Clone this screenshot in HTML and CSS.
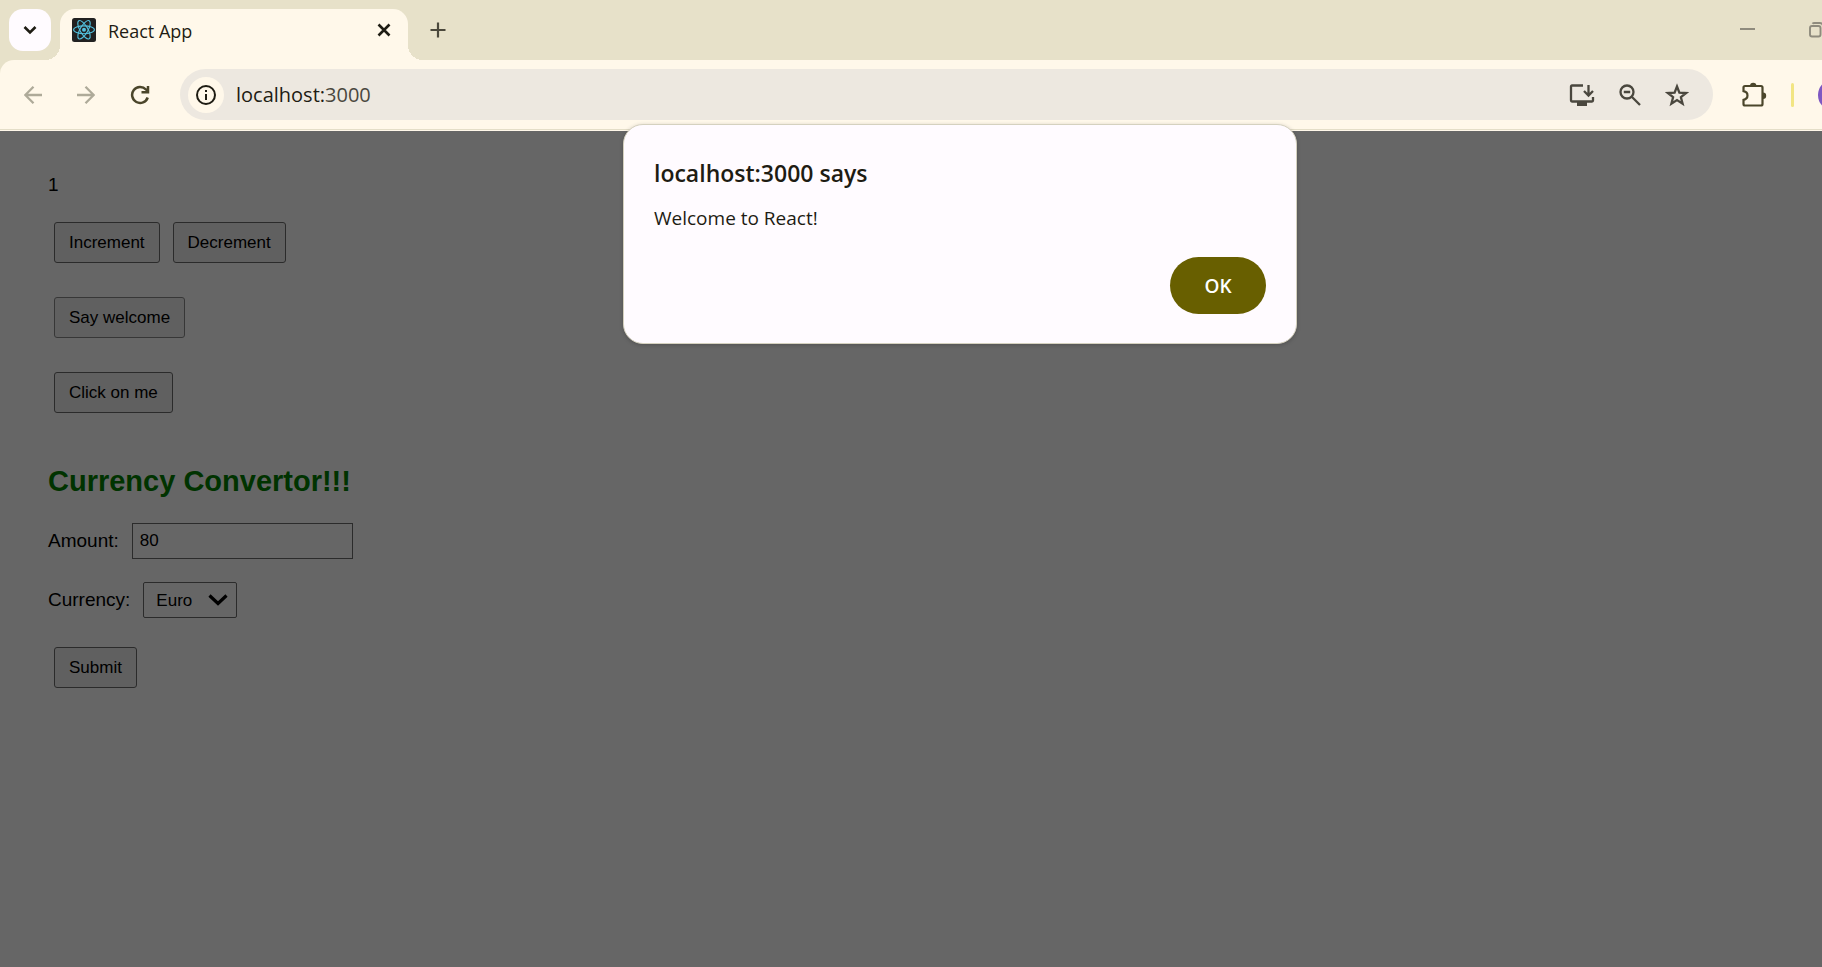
FILE: index.html
```html
<!DOCTYPE html>
<html lang="en">
<head>
<meta charset="utf-8">
<title>React App</title>
<link rel="stylesheet" href="styles.css">
</head>
<body>
<header class="browser">
  <div class="tab-strip">
    <button class="tab-search" aria-label="Search tabs"><svg width="14" height="14" viewBox="0 0 14 14"><path d="M1.500 4 7 9.500 12.500 4" class="stroke thick"/></svg></button>
    <div class="tab">
      <svg class="favicon" width="24" height="24" viewBox="0 0 24 24"><rect width="24" height="24" rx="2.500" fill="#212121"/><g fill="none" stroke="#53c1de" stroke-width="1.100"><ellipse cx="12" cy="11.800" rx="10.400" ry="3.900"/><ellipse cx="12" cy="11.800" rx="10.400" ry="3.900" transform="rotate(60 12 11.800)"/><ellipse cx="12" cy="11.800" rx="10.400" ry="3.900" transform="rotate(120 12 11.800)"/></g><circle cx="12" cy="11.800" r="2" fill="#53c1de"/></svg>
      <span class="tab-title">React App</span>
      <button class="icon-button" aria-label="Close tab"><svg width="14" height="14" viewBox="0 0 14 14"><path d="m1.500 1.500 11 11m0-11-11 11" class="stroke thick"/></svg></button>
    </div>
    <button class="icon-button new-tab" aria-label="New tab"><svg width="16" height="16" viewBox="0 0 16 16"><path d="M8 .5v15M.5 8h15" class="stroke olive"/></svg></button>
    <div class="window-controls">
      <button class="icon-button" aria-label="Minimize"><svg width="16" height="16" viewBox="0 0 16 16"><path d="M0 7h15" stroke="#8f8b7d" stroke-width="2"/></svg></button>
      <button class="icon-button" aria-label="Restore"><svg width="16" height="16" viewBox="0 0 16 16" fill="none" stroke="#8f8b7d" stroke-width="1.900"><rect x="2" y="4" width="10.500" height="10.500" rx="2"/><path d="M4.500 1.800Q5 1 6.500 1H12q3 0 3 3.500v6"/></svg></button>
    </div>
  </div>
  <div class="toolbar">
    <nav class="nav-buttons">
      <button class="icon-button" aria-label="Back"><svg width="18" height="18" viewBox="0 0 18 18"><path d="M18 9H1.500M9.500 .8 1.300 9l8.200 8.200" class="stroke faded"/></svg></button>
      <button class="icon-button" aria-label="Forward"><svg width="18" height="18" viewBox="0 0 18 18"><path d="M0 9h16.500M8.500 .8 16.700 9l-8.200 8.200" class="stroke faded"/></svg></button>
      <button class="icon-button" aria-label="Reload"><svg width="20" height="20" viewBox="0 0 20 20"><path d="M17.700 12.500A8 8 0 1 1 16 4.500l2 2M18 1v6.300h-6.500" fill="none" stroke="#4b462b" stroke-width="2.500"/></svg></button>
    </nav>
    <div class="omnibox">
      <button class="site-info" aria-label="Site information"><svg width="20" height="20" viewBox="0 0 20 20"><circle cx="10" cy="10" r="9" class="stroke dark"/><path d="M10 9v6M10 5v2" class="stroke dark"/></svg></button>
      <p class="url">localhost:<span class="port">3000</span></p>
      <button class="icon-button" aria-label="Install app"><svg width="26" height="24" viewBox="0 0 26 24"><path d="M14 2.500H3Q2 2.500 2 3.500v14q0 1 1 1h20q1 0 1-1V14" class="stroke"/><rect x="8" y="18" width="10" height="5" fill="#4a473e"/><path d="M19.500 2v10M15 8l4.500 4.500L24 8" class="stroke"/></svg></button>
      <button class="icon-button" aria-label="Zoom"><svg width="22" height="22" viewBox="0 0 22 22"><circle cx="8" cy="8" r="6.500" class="stroke"/><path d="M4.800 8h6.400M13 13l8 8" class="stroke"/></svg></button>
      <button class="icon-button" aria-label="Bookmark"><svg width="24" height="24" viewBox="0 0 24 24"><path d="m12 3.500 2.400 6.100 6.700.4-5.200 4.200 1.700 6.500-5.600-3.600-5.600 3.600 1.700-6.500L2.900 10l6.700-.4z" class="stroke" stroke-linejoin="miter"/></svg></button>
    </div>
    <button class="icon-button extensions" aria-label="Extensions"><svg width="26" height="26" viewBox="0 0 26 26"><path d="M4 4h16q1.500 0 1.500 1.500v16.500q0 1.500-1.500 1.500H4q-1.500 0-1.500-1.500v-4.200c5.300-1 5.300-7.600 0-8.600V5.500Q2.500 4 4 4z" fill="none" stroke="#4b462b" stroke-width="2.200"/><path d="M9 4a3.200 3.200 0 0 1 6.400 0zM22 10.500a3.200 3.200 0 0 1 0 6.400z" fill="#4b462b"/></svg></button>
    <span class="divider"></span>
    <button class="avatar" aria-label="Profile"></button>
  </div>
</header>
<main class="page">
  <p class="count">1</p>
  <div class="actions"><button class="button">Increment</button><button class="button">Decrement</button></div>
  <div class="actions"><button class="button soft">Say welcome</button></div>
  <div class="actions"><button class="button">Click on me</button></div>
  <h1 class="heading">Currency Convertor!!!</h1>
  <form class="converter">
    <div class="field"><label for="amount">Amount:</label><input class="control amount" id="amount" type="text" value="80"></div>
    <div class="field"><label for="currency">Currency:</label><div class="select-wrap"><select class="control currency" id="currency"><option>Euro</option></select><svg class="chevron" width="20" height="12" viewBox="0 0 20 12"><path d="m1.500 1.500 8.500 8 8.500-8" fill="none" stroke="#000" stroke-width="3.200"/></svg></div></div>
    <div class="actions"><button class="button" type="button">Submit</button></div>
  </form>
  <div class="scrim"></div>
</main>
<dialog class="alert" open aria-labelledby="alert-title">
  <h2 class="alert-title" id="alert-title">localhost:3000 says</h2>
  <p class="alert-message">Welcome to React!</p>
  <button class="ok">OK</button>
</dialog>
</body>
</html>
```

FILE: styles.css
```css
* {
  box-sizing: border-box;
}

body {
  margin: 0;
  min-height: 100vh;
  display: flex;
  flex-direction: column;
  position: relative;
  overflow: hidden;
  background: #fff;
  color: #000;
  font-family: "Liberation Sans", Arial, sans-serif;
  font-size: 19px;
}

p, h1, h2 {
  margin: 0;
}

button {
  font: inherit;
  color: inherit;
  border: 0;
  padding: 0;
}

svg {
  display: block;
  flex: none;
}

.browser {
  background: #e7e1c9;
  color: #1e1c13;
  font-family: "Open Sans", "Noto Sans", sans-serif;
}

.stroke {
  fill: none;
  stroke: #4a473e;
  stroke-width: 2.3;
}

.thick {
  stroke: #1e1c13;
  stroke-width: 2.6;
}

.dark {
  stroke: #1e1c13;
  stroke-width: 2;
}

.olive {
  stroke: #4b483b;
  stroke-width: 2.2;
}

.faded {
  stroke: #aeaa99;
}

.icon-button {
  flex: none;
  display: flex;
  background: none;
}

.tab-strip {
  display: flex;
  height: 60px;
  padding: 9px 0 0 9px;
}

.tab-search {
  position: relative;
  z-index: 1;
  width: 42px;
  height: 42px;
  display: grid;
  place-items: center;
  border-radius: 14px;
  background: #fffbff;
}

.tab {
  position: relative;
  display: flex;
  align-items: center;
  width: 348px;
  height: 51px;
  margin-left: 9px;
  padding: 0 17px 9px 12px;
  border-radius: 15px 15px 0 0;
  background: #fff8ea;
}

.tab::before,
.tab::after {
  content: "";
  position: absolute;
  bottom: 0;
  width: 15px;
  height: 15px;
}

.tab::before {
  right: 100%;
  background: radial-gradient(circle at 0 0, #e7e1c9 15px, #fff8ea 15px);
}

.tab::after {
  left: 100%;
  background: radial-gradient(circle at 100% 0, #e7e1c9 15px, #fff8ea 15px);
}

.tab-title {
  flex: 1;
  padding: 2px 0 0 12px;
  font-size: 18px;
  line-height: 24px;
}

.new-tab {
  height: 42px;
  margin-left: 22px;
  align-items: center;
}

.window-controls {
  display: flex;
  gap: 52px;
  height: 42px;
  margin: 0 -2px 0 auto;
}

.window-controls .icon-button {
  align-items: center;
}

.toolbar {
  display: flex;
  align-items: center;
  height: 71px;
  padding: 0 0 2px 24px;
  border-radius: 14px 0 0;
  background: #fff8ea;
  box-shadow: inset 0 -1px #fff8ea, inset 0 -2px #e4dec8;
}

.nav-buttons {
  display: flex;
  align-items: center;
  gap: 35px;
  margin-right: 30px;
}

.omnibox {
  flex: 1;
  display: flex;
  align-items: center;
  gap: 24px;
  height: 51px;
  padding: 0 24px 0 8px;
  border-radius: 26px;
  background: #ede8e0;
}

.site-info {
  display: grid;
  place-items: center;
  width: 36px;
  height: 36px;
  border-radius: 50%;
  background: #fff8ea;
}

.url {
  flex: 1;
  margin-left: -12px;
  font-size: 20px;
  line-height: 28px;
}

.port {
  color: #4a473e;
}

.extensions {
  margin-left: 28px;
}

.divider {
  width: 3px;
  height: 24px;
  margin: 0 24px;
  border-radius: 2px;
  background: #f2e583;
}

.avatar {
  flex: none;
  width: 32px;
  height: 32px;
  margin-right: -28px;
  border-radius: 50%;
  background: #7e57c2;
}

.page {
  position: relative;
  flex: 1;
  padding: 42px 48px;
}

.scrim {
  position: absolute;
  inset: 0;
  background: rgba(0, 0, 0, 0.6);
}

.count {
  line-height: 24px;
  margin-bottom: 25px;
}

.actions {
  display: flex;
  gap: 13px;
  margin: 0 6px 34px;
}

.button {
  height: 41px;
  padding: 0 14px;
  border: 1px solid #6b6b6b;
  border-radius: 3px;
  background: #efefef;
  font-size: 17px;
}

.soft {
  border-color: #8a8a8a;
}

.heading {
  margin-top: 50px;
  color: #008000;
  font-size: 29px;
  line-height: 36px;
}

.converter {
  display: flex;
  flex-direction: column;
  gap: 23px;
  margin-top: 24px;
}

.converter .actions {
  margin-top: 6px;
}

.field {
  display: flex;
  align-items: center;
  gap: 13px;
}

.control {
  display: block;
  height: 36px;
  border: 1px solid #6b6b6b;
  background: #fff;
  color: #000;
  font: 17px "Liberation Sans", Arial, sans-serif;
}

.amount {
  width: 221px;
  padding: 0 7px;
}

.select-wrap {
  position: relative;
}

.currency {
  width: 94px;
  padding: 0 12px;
  border-radius: 2px;
  appearance: none;
}

.chevron {
  position: absolute;
  top: 12px;
  right: 9px;
  pointer-events: none;
}

.alert {
  position: absolute;
  top: 124px;
  left: 623px;
  right: auto;
  display: flex;
  flex-direction: column;
  width: 674px;
  margin: 0;
  padding: 32px 30px 29px;
  border: 1px solid #d5d1bf;
  border-radius: 20px;
  background: #fffbff;
  color: #1e1c13;
  font-family: "Open Sans", "Noto Sans", sans-serif;
  box-shadow: 0 1px 4px rgba(0, 0, 0, 0.2);
}

.alert-title {
  font-size: 23px;
  font-weight: 600;
  line-height: 32px;
}

.alert-message {
  margin: 15px 0 25px;
  font-size: 19px;
  line-height: 28px;
}

.ok {
  align-self: flex-end;
  width: 96px;
  height: 57px;
  border-radius: 29px;
  background: #685f00;
  color: #fff;
  font-size: 19px;
  font-weight: 600;
}
```
